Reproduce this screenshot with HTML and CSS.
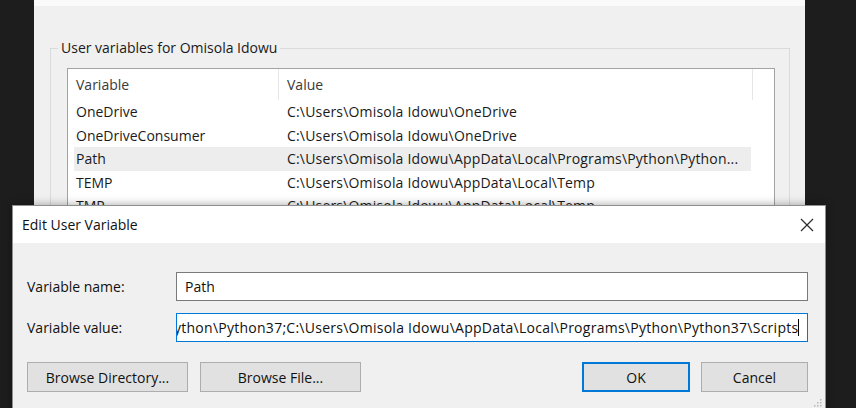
FILE: index.html
```html
<!DOCTYPE html>
<html lang="en">
<head>
<meta charset="utf-8">
<title>Edit User Variable</title>
<link rel="stylesheet" href="styles.css">
</head>
<body>
<div class="desk">
  <div class="win bg-win">
    <div class="win-top"></div>
    <div class="win-body">
      <fieldset class="group">
        <legend>User variables for Omisola Idowu</legend>
        <div class="list">
          <div class="list-head">
            <div class="h1">Variable</div>
            <div class="h2">Value</div>
          </div>
          <div class="row"><span class="c1">OneDrive</span><span class="c2">C:\Users\Omisola Idowu\OneDrive</span></div>
          <div class="row"><span class="c1">OneDriveConsumer</span><span class="c2">C:\Users\Omisola Idowu\OneDrive</span></div>
          <div class="row sel"><span class="c1">Path</span><span class="c2">C:\Users\Omisola Idowu\AppData\Local\Programs\Python\Python...</span></div>
          <div class="row"><span class="c1">TEMP</span><span class="c2">C:\Users\Omisola Idowu\AppData\Local\Temp</span></div>
          <div class="row"><span class="c1">TMP</span><span class="c2">C:\Users\Omisola Idowu\AppData\Local\Temp</span></div>
        </div>
      </fieldset>
    </div>
  </div>

  <div class="dialog">
    <div class="titlebar">
      <span class="title">Edit User Variable</span>
      <span class="close">
        <svg width="14" height="14" viewBox="0 0 14 14"><path d="M1 1 L13 13 M13 1 L1 13" stroke="#2b2b2b" stroke-width="1.2" fill="none"/></svg>
      </span>
    </div>
    <div class="dbody">
      <div class="field">
        <label class="lbl">Variable name:</label>
        <div class="input">Path</div>
      </div>
      <div class="field">
        <label class="lbl">Variable value:</label>
        <div class="input focus"><span class="val">ython\Python37;C:\Users\Omisola Idowu\AppData\Local\Programs\Python\Python37\Scripts</span><span class="caret"></span></div>
      </div>
      <div class="buttons">
        <button class="btn wide">Browse Directory...</button>
        <button class="btn wide">Browse File...</button>
        <button class="btn ok">OK</button>
        <button class="btn cancel">Cancel</button>
      </div>
    </div>
    <svg class="grip" width="9" height="9" viewBox="0 0 9 9">
      <rect x="7" y="1" width="1.5" height="1.5" fill="#b8b8b8"/>
      <rect x="4" y="4" width="1.5" height="1.5" fill="#b8b8b8"/>
      <rect x="7" y="4" width="1.5" height="1.5" fill="#b8b8b8"/>
      <rect x="1" y="7" width="1.5" height="1.5" fill="#b8b8b8"/>
      <rect x="4" y="7" width="1.5" height="1.5" fill="#b8b8b8"/>
      <rect x="7" y="7" width="1.5" height="1.5" fill="#b8b8b8"/>
    </svg>
  </div>
</div>
</body>
</html>
```

FILE: styles.css
```css
* { box-sizing: border-box; }
html, body { margin: 0; padding: 0; }
body {
  background: #1e1e1e;
  font-family: "Open Sans", "Noto Sans", sans-serif;
  font-size: 14px;
  color: #111;
}
.desk {
  position: relative;
  width: 856px;
  height: 408px;
  overflow: hidden;
  background: #1d1d1d;
}

/* background window */
.bg-win {
  position: absolute;
  left: 34px;
  top: 0;
  width: 771px;
  height: 420px;
  background: #f0f0f0;
}
.win-top { height: 6px; background: #fafafa; }
.win-body { padding: 0 0 0 16px; }
.group {
  margin: 32px 0 0 0;
  width: 740px;
  border: 1px solid #dadada;
  padding: 0 14px 20px 16px;
  min-width: 0;
}
.group legend {
  padding: 0 3px;
  margin-left: -9px;
  line-height: 20px;
  color: #1a1a1a;
}
.list {
  margin-top: 10px;
  width: 708px;
  height: 300px;
  border: 1px solid #a3a3a3;
  background: #fff;
}
.list-head {
  display: flex;
  height: 31px;
  line-height: 31px;
  color: #3a3a3a;
}
.h1 {
  width: 211px;
  padding-left: 8px;
  border-right: 1px solid #e6e6e6;
}
.h2 {
  width: 474px;
  padding-left: 8px;
  border-right: 1px solid #e6e6e6;
}
.row {
  display: flex;
  margin-left: 6px;
  width: 677px;
  height: 23.5px;
  line-height: 23.5px;
  white-space: nowrap;
  color: #1a1a1a;
}
.row.sel { background: #ededed; }
.c1 { width: 205px; padding-left: 2px; }
.c2 { padding-left: 8px; overflow: hidden; letter-spacing: 0.18px; }

/* dialog */
.dialog {
  position: absolute;
  left: 12px;
  top: 205px;
  width: 814px;
  height: 210px;
  border: 1px solid #8f8f8f;
  background: #f0f0f0;
  box-shadow: 0 0 9px rgba(0, 0, 0, 0.35);
}
.titlebar {
  height: 37px;
  background: #fff;
  display: flex;
  align-items: center;
  justify-content: space-between;
  padding-left: 9px;
}
.title { color: #111; }
.close {
  width: 36px;
  height: 37px;
  display: flex;
  align-items: center;
  justify-content: center;
}
.dbody { padding: 29px 17px 0 14px; }
.field {
  display: flex;
  align-items: center;
  margin-bottom: 12px;
}
.lbl { width: 149px; color: #111; }
.input {
  flex: 1;
  height: 29px;
  line-height: 27px;
  border: 1px solid #7a7a7a;
  background: #fff;
  padding-left: 8px;
  white-space: nowrap;
  overflow: hidden;
}
.input.focus {
  border-color: #0078d7;
  display: flex;
  align-items: center;
  padding-left: 0;
}
.val {
  flex: none;
  margin-left: -3px;
  letter-spacing: 0.26px;
}
.caret {
  flex: none;
  width: 1px;
  height: 17px;
  background: #000;
  margin-left: 0;
}
.buttons {
  display: flex;
  margin-top: 20px;
}
.btn {
  font-family: inherit;
  font-size: 14px;
  color: #111;
  height: 30px;
  background: #e1e1e1;
  border: 1px solid #adadad;
  padding: 0;
}
.wide { width: 161px; margin-right: 12px; }
.ok {
  margin-left: auto;
  width: 108px;
  border: 2px solid #0078d7;
  margin-right: 11px;
}
.cancel { width: 107px; }
.grip {
  position: absolute;
  right: 3px;
  top: 192px;
}
```
